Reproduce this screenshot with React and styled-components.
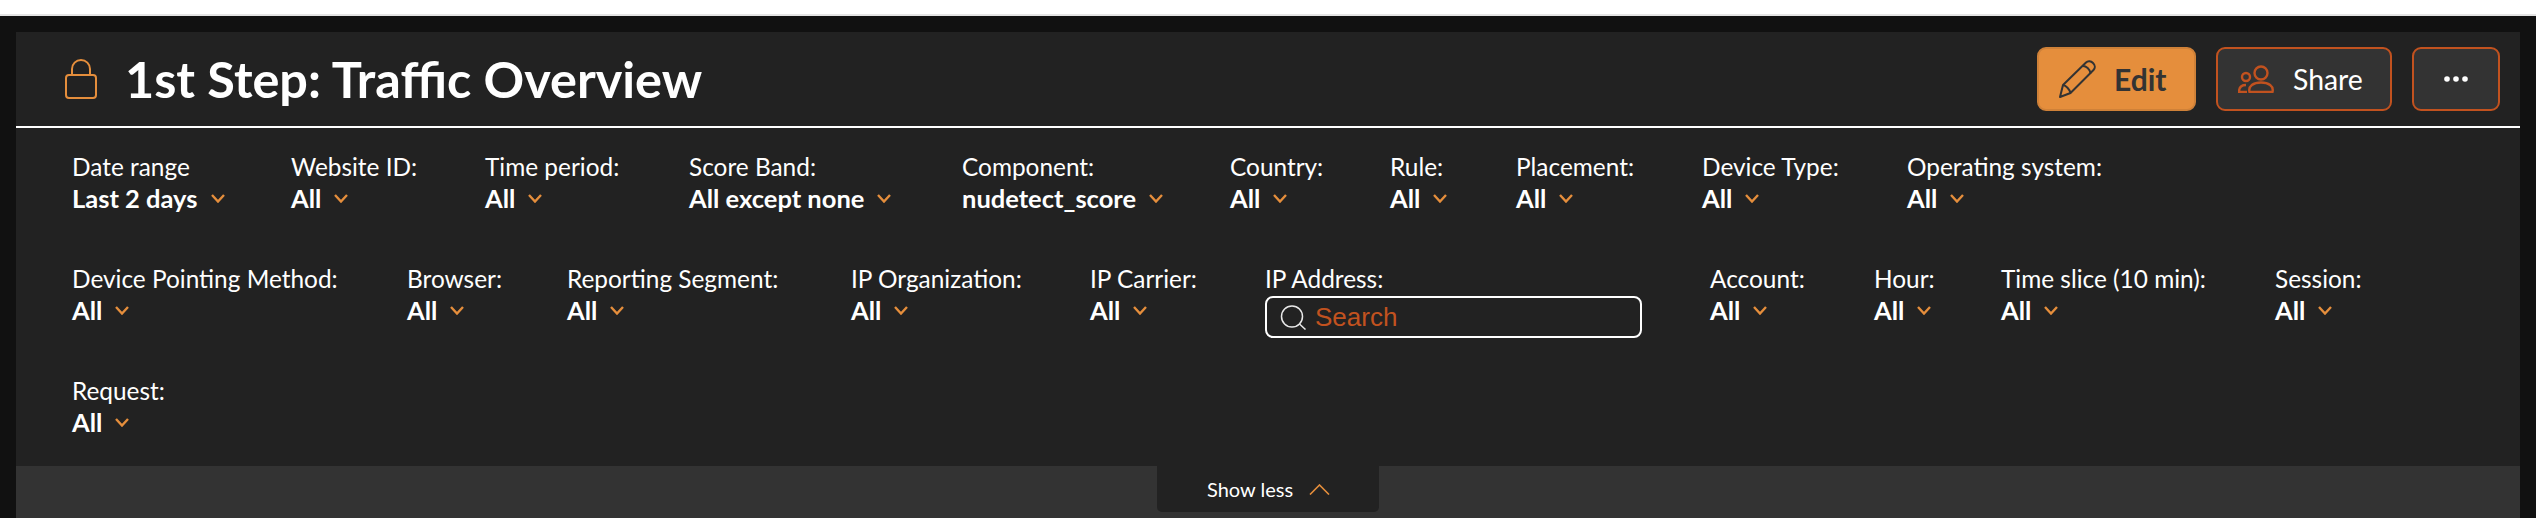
import React from 'react';
import styled, { createGlobalStyle } from 'styled-components';

const GlobalStyle = createGlobalStyle`
  html, body {
    margin: 0;
    background: #111111;
    overflow: hidden;
  }
  * { box-sizing: border-box; }
`;

const TopStrip = styled.div`
  height: 16px;
  background: #fff;
  border-bottom: 2px solid #e4e4e4;
`;

const Page = styled.div`
  width: 2536px;
  height: 518px;
  overflow: hidden;
  background: #111111;
  font-family: Lato, "Noto Sans", sans-serif;
`;

const Frame = styled.div`
  padding: 16px 16px 0;
`;

const Panel = styled.section`
  background: #222222;
  height: 486px;
  display: flex;
  flex-direction: column;
`;

const Header = styled.header`
  height: 96px;
  flex: none;
  display: flex;
  align-items: center;
  padding: 0 20px 0 49px;
  border-bottom: 2px solid #fff;
`;

const Title = styled.h1`
  margin: 0 0 0 28px;
  font-size: 50.4px;
  line-height: 60px;
  font-weight: 700;
  color: #fff;
  flex: 1;
`;

const Actions = styled.div`
  display: flex;
  gap: 20px;
`;

const ActionButton = styled.button`
  height: 64px;
  width: ${p => p.$w}px;
  padding: 0 0 0 ${p => p.$pad || 0}px;
  display: flex;
  align-items: center;
  gap: ${p => p.$gap || 0}px;
  justify-content: ${p => (p.$pad ? 'flex-start' : 'center')};
  font-family: inherit;
  font-size: ${p => (p.$primary ? 30 : 28.4)}px;
  border-radius: 9px;
  border: 2px solid ${p => (p.$primary ? '#cf8138' : '#c2521f')};
  background: ${p => (p.$primary ? '#e58e3c' : '#333333')};
  color: ${p => (p.$primary ? '#333333' : '#ffffff')};
  font-weight: ${p => (p.$primary ? 700 : 400)};
`;

const Filters = styled.div`
  flex: 1;
  padding: 23px 0 0 56px;
  display: flex;
  flex-direction: column;
  gap: 48px;
`;

const FilterRow = styled.div`
  display: flex;
  height: 64px;
`;

const Filter = styled.div`
  width: ${p => p.$w}px;
  flex: none;
  color: #fff;
`;

const FilterLabel = styled.div`
  font-size: 24.4px;
  line-height: 32px;
  white-space: nowrap;
`;

const FilterValue = styled.div`
  display: flex;
  align-items: center;
  gap: 13px;
  margin-top: -1px;
  font-size: 25.5px;
  line-height: 32px;
  font-weight: 700;
  white-space: nowrap;
`;

const SearchBox = styled.div`
  width: 377px;
  height: 42px;
  margin-top: 1px;
  padding-left: 13px;
  display: flex;
  align-items: center;
  gap: 9px;
  border: 2px solid #fff;
  border-radius: 8px;
`;

const SearchText = styled.span`
  font-family: "Liberation Sans", Arial, sans-serif;
  font-size: 26px;
  color: #c2521f;
`;

const Band = styled.div`
  height: 52px;
  flex: none;
  background: #333333;
  display: flex;
  justify-content: center;
  align-items: flex-start;
`;

const ShowLess = styled.button`
  width: 222px;
  height: 46px;
  padding: 0 0 0 50px;
  display: flex;
  align-items: center;
  gap: 16px;
  border: 0;
  border-radius: 0 0 5px 5px;
  background: #222222;
  color: #fff;
  font-family: inherit;
  font-size: 20px;
`;

const Chevron = () => (
  <svg width="14" height="9" viewBox="0 0 14 9" fill="none">
    <path d="M1 1l6 6.5L13 1" stroke="#e58e3c" strokeWidth="2.4" />
  </svg>
);

const ChevronUp = () => (
  <svg width="21" height="11" viewBox="0 0 21 11" fill="none">
    <path d="M1 10.5L10.5 1 20 10.5" stroke="#e58e3c" strokeWidth="1.6" />
  </svg>
);

const LockIcon = () => (
  <svg width="32" height="40" viewBox="0 0 32 40" fill="none" stroke="#e58e3c" strokeWidth="2">
    <rect x="1" y="16" width="30" height="23" rx="3" />
    <path d="M7 16V10a9 9 0 0 1 18 0v6" />
  </svg>
);

const PencilIcon = () => (
  <svg width="37" height="38" viewBox="0 0 37 38" fill="none" stroke="#333333" strokeWidth="2" strokeLinejoin="round">
    <path d="M1 37l3-12L27 2.500c2-2 5-1.500 7 .500s2.500 5 .5 7L11.500 33z" />
    <path d="M24 6c3 0 7 3 7.500 7.500" />
    <path d="M4 25c3 .5 6.500 4 7.500 8" />
  </svg>
);

const ShareIcon = () => (
  <svg width="37" height="28" viewBox="0 0 37 28" fill="none" stroke="#c2521f" strokeWidth="2.4">
    <circle cx="23" cy="8" r="6.500" />
    <path d="M11.500 27c-1.500-6 4-9.500 11.500-9.500s13 3.500 11.500 9.500z" />
    <circle cx="8" cy="12" r="4" />
    <path d="M8 20c-4 0-7 2-7 7h8" />
  </svg>
);

const SearchIcon = () => (
  <svg width="26" height="25" viewBox="0 0 26 25" fill="none" stroke="#e8e8e8" strokeWidth="1.500">
    <circle cx="12" cy="11.500" r="10.500" />
    <path d="M19.500 19l6 5.500" />
  </svg>
);

const DotsIcon = () => (
  <svg width="24" height="6" viewBox="0 0 24 6" fill="#fff">
    <circle cx="3" cy="3" r="2.800" />
    <circle cx="12" cy="3" r="2.800" />
    <circle cx="21" cy="3" r="2.800" />
  </svg>
);

const rows = [
  [
    ['Date range', 'Last 2 days', 219],
    ['Website ID:', 'All', 194],
    ['Time period:', 'All', 204],
    ['Score Band:', 'All except none', 273],
    ['Component:', 'nudetect_score', 268],
    ['Country:', 'All', 160],
    ['Rule:', 'All', 126],
    ['Placement:', 'All', 186],
    ['Device Type:', 'All', 205],
    ['Operating system:', 'All', 300],
  ],
  [
    ['Device Pointing Method:', 'All', 335],
    ['Browser:', 'All', 160],
    ['Reporting Segment:', 'All', 284],
    ['IP Organization:', 'All', 239],
    ['IP Carrier:', 'All', 175],
    ['IP Address:', null, 445],
    ['Account:', 'All', 164],
    ['Hour:', 'All', 127],
    ['Time slice (10 min):', 'All', 274],
    ['Session:', 'All', 120],
  ],
  [['Request:', 'All', 200]],
];

const App = () => (
  <Page>
    <GlobalStyle />
    <TopStrip />
    <Frame>
      <Panel>
        <Header>
          <LockIcon />
          <Title>1st Step: Traffic Overview</Title>
          <Actions>
            <ActionButton $primary $w={159} $pad={20} $gap={18}>
              <PencilIcon />
              Edit
            </ActionButton>
            <ActionButton $w={176} $pad={20} $gap={18}>
              <ShareIcon />
              Share
            </ActionButton>
            <ActionButton $w={88}>
              <DotsIcon />
            </ActionButton>
          </Actions>
        </Header>
        <Filters>
          {rows.map((row, i) => (
            <FilterRow key={i}>
              {row.map(([label, value, w]) => (
                <Filter key={label} $w={w}>
                  <FilterLabel>{label}</FilterLabel>
                  {value ? (
                    <FilterValue>
                      {value}
                      <Chevron />
                    </FilterValue>
                  ) : (
                    <SearchBox>
                      <SearchIcon />
                      <SearchText>Search</SearchText>
                    </SearchBox>
                  )}
                </Filter>
              ))}
            </FilterRow>
          ))}
        </Filters>
        <Band>
          <ShowLess>
            Show less
            <ChevronUp />
          </ShowLess>
        </Band>
      </Panel>
    </Frame>
  </Page>
);

export default App;
